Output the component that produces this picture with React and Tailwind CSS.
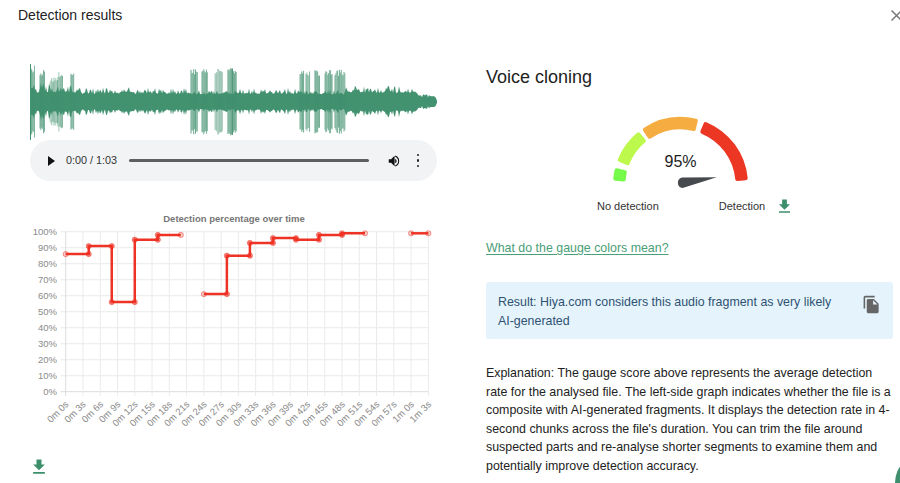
const DL = "M19 9h-4V3H9v6H5l7 7 7-7zM5 18v2h14v-2H5z";
const COPY = "M16 1H4c-1.1 0-2 .9-2 2v14h2V3h12V1zm-1 4 6 6v10c0 1.1-.9 2-2 2H7.99C6.89 23 6 22.1 6 21l.01-14c0-1.1.89-2 1.99-2h7zm-1 7h5.5L14 6.5V12z";

function rng(seed) {
  let s = seed;
  return () => {
    s = (s * 16807) % 2147483647;
    return (s - 1) / 2147483646;
  };
}

const BURSTS = [
  [30, 35, 36, 1], [40, 45, 32, 0.95], [50, 54, 24, 0.65], [54, 58, 25, 0.7], [58, 63, 30, 0.8], [71, 74, 33, 0.95],
  [191, 198, 34, 0.95], [202, 208, 34, 1], [215, 223, 33, 0.65], [228, 237, 34, 1],
  [300, 304, 34, 0.95], [306, 310, 32, 0.8], [315, 320, 32, 0.95], [325, 333, 32, 0.95], [335, 345, 32, 0.9],
];

function buildWave() {
  const r = rng(4711);
  const cy = 101.7;
  const top = [];
  const bottom = [];
  const spike = () => Math.pow(r(), 2.2);
  for (let x = 30; x <= 437; x += 1) {
    let a;
    if (x < 75) a = 9 + spike() * 11;
    else if (x < 190) a = 8 + spike() * 6 + (x > 120 && x < 135 ? 1.5 : 0);
    else if (x < 237) a = 7.5 + spike() * 4;
    else if (x < 298) a = 8 + spike() * 6;
    else if (x < 346) a = 7.5 + spike() * 5;
    else if (x < 415) a = 9 + spike() * 7;
    else if (x < 419) a = 10 - (x - 415) * 1.2 + r() * 2;
    else if (x < 431) a = 4.5 + r() * 3;
    else a = 5.5 - Math.pow(Math.max(0, x - 434), 2) * 0.5;
    top.push(`${x.toFixed(2)} ${(cy - a).toFixed(2)}`);
    bottom.unshift(`${x.toFixed(2)} ${(cy + a * 0.98).toFixed(2)}`);
  }
  const body = `M${top.join("L")}L${bottom.join("L")}Z`;
  const bars = [];
  BURSTS.forEach(([a, b, amp, op], i) => {
    for (let x = a; x < b; x += 0.9) {
      const h = amp * (0.8 + r() * 0.2);
      bars.push({ k: `${i}-${x}`, x, h, op: op * (0.65 + r() * 0.35) });
    }
  });
  return { body, bars, cy };
}
const WAVE = buildWave();

const X0 = 65.7;
const STEP = 17.27;
const Y0 = 391.7;
const yOf = (v) => Y0 - v * 1.6;
const xOf = (s) => X0 + (s / 3) * STEP;
const LABELS = ["0m 0s","0m 3s","0m 6s","0m 9s","0m 12s","0m 15s","0m 18s","0m 21s","0m 24s","0m 27s","0m 30s","0m 33s","0m 36s","0m 39s","0m 42s","0m 45s","0m 48s","0m 51s","0m 54s","0m 57s","1m 0s","1m 3s"];
const SERIES = [
  [[0,86],[4,86],[4,91],[8,91],[8,56],[12,56],[12,95],[16,95],[16,98],[20,98]],
  [[24,61],[28,61],[28,85],[32,85],[32,93],[36,93],[36,96],[40,96],[40,95],[44,95],[44,98],[48,98],[48,99],[52,99]],
  [[60,99],[63,99]],
];
const HOLLOW = new Set(["20,98", "24,61", "52,99", "60,99", "63,99", "0,86"]);

function Chart() {
  return (
    <svg width="407" height="240" viewBox="30 208 407 240" className="block">
      <text x="234" y="221.5" textAnchor="middle" fontSize="9.5" fontWeight="700" fill="#777">Detection percentage over time</text>
      {Array.from({ length: 11 }, (_, i) => (
        <g key={i}>
          <line x1={X0 - 5} x2={428.4} y1={yOf(i * 10)} y2={yOf(i * 10)} stroke={i === 0 ? "#dcdcdc" : "#ebebeb"} strokeWidth="1" />
          <text x="57" y={yOf(i * 10) + 3.4} textAnchor="end" fontSize="9.5" fill="#8a8a8a">{i * 10}%</text>
        </g>
      ))}
      {LABELS.map((l, i) => {
        const x = X0 + i * STEP;
        return (
          <g key={l}>
            <line x1={x} x2={x} y1={231.7} y2={396} stroke={i === 0 ? "#dcdcdc" : "#ebebeb"} strokeWidth="1" />
            <text transform={`translate(${x + 3.5} ${405}) rotate(-45)`} textAnchor="end" fontSize="9.5" fill="#8a8a8a">{l}</text>
          </g>
        );
      })}
      {SERIES.map((s, i) => (
        <polyline key={i} points={s.map(([a, b]) => `${xOf(a)},${yOf(b)}`).join(" ")} fill="none" stroke="#ee3224" strokeWidth="2.5" />
      ))}
      {SERIES.flat().map(([a, b]) => (
        <circle key={`${a}-${b}`} cx={xOf(a)} cy={yOf(b)} r="2.6"
          fill={HOLLOW.has(`${a},${b}`) ? "rgba(238,50,36,0.25)" : "rgba(238,50,36,0.55)"}
          stroke="rgba(238,50,36,0.6)" strokeWidth="0.8" />
      ))}
    </svg>
  );
}

const CX = 680.5;
const CY = 184.5;
function seg(a1, a2, r1 = 57, r2 = 65.5) {
  const p = (r, a) => {
    const t = (a * Math.PI) / 180;
    return `${(CX + r * Math.cos(t)).toFixed(2)} ${(CY - r * Math.sin(t)).toFixed(2)}`;
  };
  return `M${p(r2, a1)}A${r2} ${r2} 0 0 0 ${p(r2, a2)}L${p(r1, a2)}A${r1} ${r1} 0 0 1 ${p(r1, a1)}Z`;
}

function Gauge() {
  return (
    <svg width="407" height="84" viewBox="486 110 407 84" className="block">
      {[
        [167.5, 175, "#76fb4b"],
        [130, 158, "#bdf84c"],
        [76.5, 123, "#f5ac41"],
        [5.5, 67.5, "#eb3724"],
      ].map(([a, b, c]) => (
        <path key={c} d={seg(a, b)} fill={c} stroke={c} strokeWidth="4" strokeLinejoin="round" />
      ))}
      <text x="680.5" y="167" textAnchor="middle" fontSize="16" fill="#222">95%</text>
      <path d="M716.7 177.3L682 177.4A5.4 5.4 0 0 0 682.6 188Z" fill="#464a4f" />
    </svg>
  );
}

function Icon({ d, className }) {
  return (
    <svg viewBox="0 0 24 24" className={className} fill="currentColor">
      <path d={d} />
    </svg>
  );
}

export default function App() {
  return (
    <div className="relative w-[900px] h-[483px] overflow-hidden bg-white text-[#222] [font-family:'Liberation_Sans',Arial,sans-serif]">
      <header className="flex items-center justify-between h-[30px] pl-[18px]">
        <h2 className="text-[14px] text-[#222]">Detection results</h2>
        <svg width="11" height="11" viewBox="0 0 11 11" className="-mr-[2px] shrink-0" stroke="#777" strokeWidth="1.5">
          <path d="M0.5 0.5L10.5 10.5M10.5 0.5L0.5 10.5" />
        </svg>
      </header>

      <div className="flex pl-[30px] pt-[34px] gap-[49px]">
        <section className="w-[407px] shrink-0">
          <svg width="407" height="76" viewBox="30 64 407 76" className="block">
            <path d={WAVE.body} fill="#42916f" />
            {WAVE.bars.map((b) => (
              <line key={b.k} x1={b.x} x2={b.x} y1={WAVE.cy - b.h} y2={WAVE.cy + b.h} stroke="#42916f" strokeWidth="0.9" opacity={b.op} />
            ))}
            <line x1="30.5" x2="30.5" y1="64" y2="140" stroke="#42916f" strokeWidth="1" />
          </svg>
          <div className="flex items-center h-[41px] rounded-full bg-[#f1f3f4] pl-[18px] pr-[18px]">
            <svg width="7" height="10" viewBox="0 0 7 10" className="shrink-0"><path d="M0 0L7 5L0 10Z" fill="#111" /></svg>
            <span className="ml-[11px] w-[63px] shrink-0 text-[10.8px] text-[#333]">0:00 / 1:03</span>
            <div className="h-[2.5px] w-[240px] rounded-full bg-[#5f5f5f]" />
            <svg width="14" height="14" viewBox="0 0 24 24" className="ml-[18px] shrink-0" fill="#111">
              <path d="M3 9v6h4l6 6V3L7 9H3zm13.5 3A4.5 4.5 0 0 0 14 7.97v8.05A4.5 4.5 0 0 0 16.5 12zM14 2.5v2.06a8 8 0 0 1 0 14.88v2.06a10 10 0 0 0 0-19z" />
            </svg>
            <div className="ml-[16px] flex flex-col gap-[3px]">
              <span className="size-[2.5px] rounded-full bg-[#222]" />
              <span className="size-[2.5px] rounded-full bg-[#222]" />
              <span className="size-[2.5px] rounded-full bg-[#222]" />
            </div>
          </div>
          <div className="mt-[27px]">
            <Chart />
          </div>
          <Icon d={DL} className="mt-[9px] -ml-[1px] size-[20px] text-[#3d8f6c]" />
        </section>

        <section className="w-[407px] shrink-0">
          <h3 className="text-[18px] leading-[24px] mt-[1px] text-[#222]">Voice cloning</h3>
          <div className="mt-[21px]">
            <Gauge />
          </div>
          <div className="flex items-center h-[16px] pl-[111px] mt-[4px] text-[11px] text-[#333]">
            <span>No detection</span>
            <span className="ml-[60px]">Detection</span>
            <Icon d={DL} className="ml-[10px] size-[19px] text-[#3d8f6c]" />
          </div>
          <a className="block mt-[25px] text-[12.4px] leading-[18px] text-[#4a9e78] underline underline-offset-2">What do the gauge colors mean?</a>
          <div className="mt-[25px] flex justify-between rounded-[3px] bg-[#e5f4fc] h-[57px] pl-[12px] pr-[12px] pt-[11px]">
            <p className="w-[345px] text-[12.4px] leading-[18.5px] text-[#2f5273]">Result: Hiya.com considers this audio fragment as very likely AI-generated</p>
            <Icon d={COPY} className="size-[19px] mt-[2px] text-[#666]" />
          </div>
          <p className="mt-[25px] text-[12.4px] leading-[18.5px] text-[#222]">Explanation: The gauge score above represents the average detection rate for the analysed file. The left-side graph indicates whether the file is a composite with AI-generated fragments. It displays the detection rate in 4-second chunks across the file's duration. You can trim the file around suspected parts and re-analyse shorter segments to examine them and potentially improve detection accuracy.</p>
        </section>
      </div>

      <div className="absolute left-[895px] top-[453px] size-[60px] rounded-full bg-[#3f8f6f]" />
    </div>
  );
}
